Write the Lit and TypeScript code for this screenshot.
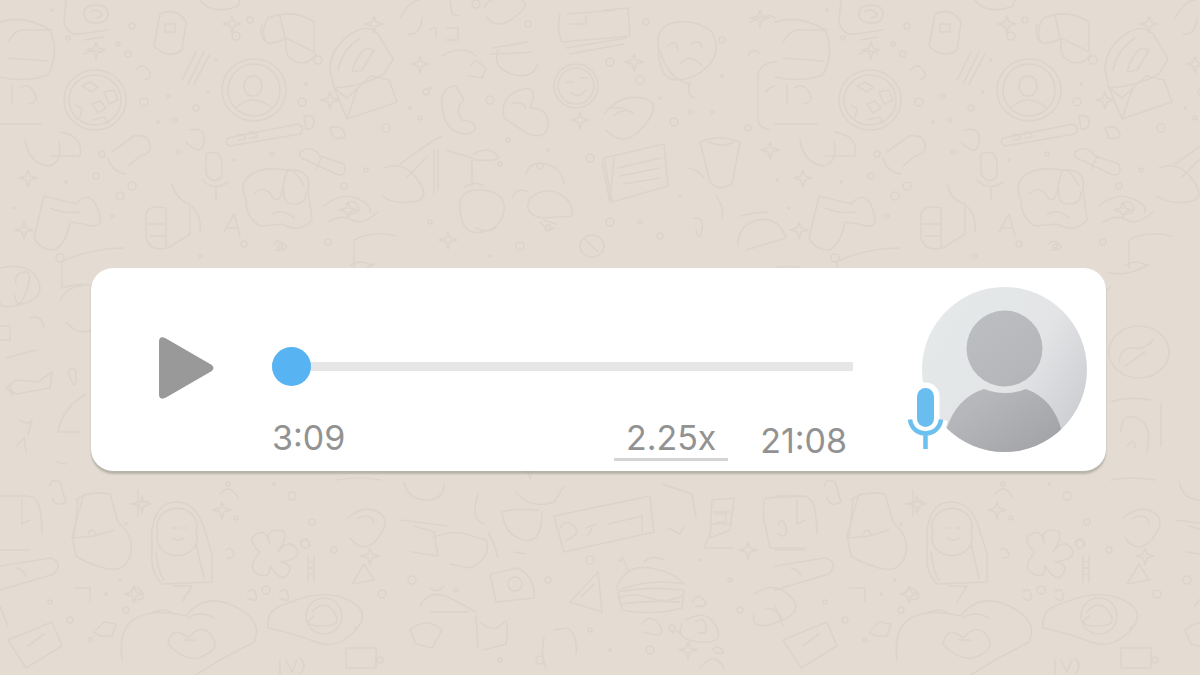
import { LitElement, html, css, svg } from "lit";
import { customElement, property, state } from "lit/decorators.js";

// Width of one repeat of the doodle wallpaper.
const TILE = 775;

const DOODLES = [
  // cake, ball and cup on the left
  "M0 22q25-8 50 8q10 22-2 45q-24 8-48 2M8 58l40 3M8 42q8-14 18-12h26M0 124h42M12 85v18M20 88q8-6 14 4t-6 12M25 140q4 24 24 26q14-4 10-24",
  "M64 100a31 30 0 1 0 62 0a31 30 0 1 0-62 0M69 100a26 25 0 1 0 52 0a26 25 0 1 0-52 0M82 86l8-4l8 5l-6 5zM104 92l10-2l4 10l-9 4zM92 104l8-3l6 7l-8 5zM76 105l6 4l-2 8M92 120l12-3l4 6",
  // ring, chick and stationery along the top
  "M66 0l-2 22q4 14 16 12l28-4M84 13q0-8 12-8t12 9t-12 9t-12-10M90 12q4-4 10 0t-4 6M160 14q16-8 26 8l-4 28q-14 10-28-4zM165 24h10v8h-10zM85 40l18-3M84 54q10-6 18-1",
  "M182 80l14-28M188 84l16-32M194 84l16-30M136 70q6-8 12 0t-4 10M200 0q12 16 38 6l2-6M262 24q-4 18 10 20M268 18q26-10 46 4v30l-28-14q-10 6-14 4M268 18q-8 14-2 24M286 42q-2 16 10 20t20-8M280 16l6 26",
  // medallion
  "M222 90a32 31 0 1 0 64 0a32 31 0 1 0-64 0M228 90a26 26 0 1 0 52 0a26 26 0 1 0-52 0M244 86a8 9 0 1 0 18 0a8 9 0 1 0-18 0M236 108q16-16 36 0",
  // envelope with shell
  "M330 70q0-20 18-34t30-2l15 25-9 15q-20 12-50 14zM338 70q4-20 22-32M352 72q4-16 14-24l8 2-12 20zM334 88l13 31l50-17-8-22-18-4-24 22zM358 87l-11 32",
  // flute and little rings
  "M228 138l70-14q8 4 2 10l-70 12q-6-2-2-8M236 136q4-4 8 0t-6 4M248 134q4-4 8 0t-6 4M304 116q10-2 10 6t-8 7zM330 128q10-4 14 4t-10 6z",
  "M60 132q24 4 20 24h-30M112 152l22-16q14-2 16 8t-10 12l-12 10M108 158q4 14 18 16M190 130q16-4 14 12t-18 0M206 154q14-6 16 8v14q-8 10-16-2zM202 180q12 12 26 2M216 188v12",
  "M300 152q12-8 20 4l24 8q4 14-8 10l-30-14q-8-2-6-8M322 156l-6 14M246 200q-8-18 6-26t34-4q26-2 22 20l4 30q-12 14-30 4l-22 2q-14-8-14-26M254 194q10-10 18 2t12-14 20 4M284 190q-2 14 10 14t12-12M272 214q12-6 22 4",
  "M44 196l32 8q14-16 22 6t-14 14l-14-2q-4 22-16 28-14 0-20-12zM50 208q14 6 30 4M146 216q0-12 20-8v40q-16 4-20-10zM146 224h18M150 236h16M172 184q4 16 18 20v30l-22 14M192 206q10 10 8 26M224 232l10-18l6 22M228 228h10",
  "M324 206q16-14 32-8t14 14M328 222q14-8 24-2t26-8M346 204q8-6 12 2t-10 8M354 240q18-10 42-4M354 240v28M60 262q32-14 64-14M274 244q4-6 10 0t-8 6",
  // top centre: cup, paper and frog
  "M400 18q10-18 20-18M408 34q12 2 14-16M450 0l2 14 8 2M484 8q4-12 28-10t4 18-30 0M430 30q8-8 6 8M446 28h12v12h-12M492 48l36-6M490 54q20 0 42-2M498 50q-6 18 14 24t26-10",
  "M560 14q-4 16 2 28l68-6-2-28-24 2M568 14l48-4M570 24h16v-8M566 48l60-10M570 54l54-10M658 42q0-18 20-20t34 10q10 20-4 34t-32 14-18-38M668 46q8-8 10 4M692 44q8-6 10 4M680 64q10-12 22 2M660 50q8 30 30 34",
  "M554 86a22 22 0 1 0 44 0a22 22 0 1 0-44 0M558 86a18 18 0 1 0 36 0a18 18 0 1 0-36 0M566 82h8M580 78h8M570 92q8 8 16-2M442 96q-2 38 26 38q12-4 4-12l-10-2q-8-12 2-20l-8-14q-10 0-14 10M470 66l6-6 10 8-4 10-14-2M442 56q20-12 34 0M504 118q-4-22 16-28t10 18q18 0 18 16t-20 10l-24-16M512 104q10-4 14 4",
  "M604 114q16-20 38-16t2 28-38 4M608 108h16M614 116q10-10 20-2M690 82q-4 12 4 16M750 22q20-10 25-4M758 74q4-12 18-12M758 74v44q0 10 12 12M766 92q4-6 10-6M748 56q4-10 12-2",
  // middle: pencils, kettle, book, glass
  "M400 164l34-24 8-4M406 178l22-22M434 150v44M438 150v40M384 168q20-8 34 12t-6 22-30-6M446 150l26 8v28M474 154q12-8 22 0t-22 6M460 210q-2-22 22-20t22 20-22 22-22-22M464 188q10-8 20-2M476 228q10 6 20 0M526 174q4-14 20-10t18 20M512 198q6-12 16-6M530 198q16-12 30-4t12 22l-30 2q-20-4-12-20",
  "M604 158l60-14 4 42-56 16zM610 202l-8-40M614 158l-4 42M618 168l42-10M620 176l40-8M624 184l36-6M700 142q18-8 40 0l-8 42q-14 8-22-2zM708 142q16 6 26 0M688 168q8 0 16 10M740 216q14-4 28-4M738 246q0-22 20-26t28 18l-40 12M716 196q8 10 6 22M694 218q10-2 8 12t-6 0M544 220l12 4M540 222q8 10 14 6M580 246a12 11 0 1 0 24 0a12 11 0 1 0-24 0M584 238l14 14",
  // either side of the card
  "M0 268q30-6 38 12t-16 24-22-2M16 284q-2-10 8-12t2 20-12 2M62 262v26q20-6 30-2M60 300q8-14 22-14M66 322q12 14 26 8M0 326h10v14H0M30 318q12-4 14 10M6 358l30-8M6 388l10-8 22 2 14-10-2 16-34 6zM12 396l-2-12M68 372q8-10 8 6t-8-6M58 432q4-24 28-38M58 432h22M20 420q8 6 12 0l-4 14M16 446l8-8 2 14M56 462l10 2",
  "M336 286l-6 6M350 266q10-8 22 0M332 272q20 6 42-8M334 352a30 26 0 1 0 60 0a30 26 0 1 0-60 0M344 362q2-16 14-14t20-8M350 366l20-14M336 402q18-6 40-2M346 432q0-20 16-14t10 34M352 446q8-10 8 2M386 404v42M336 480q22-4 44 0",
  // below the card, left
  "M0 496h26q12 0 14 14t2 24M0 550h30M22 500v24l8-4M50 486q0-8 10-4l6 20q-10 6-14-4M0 566l50-8q14 4 4 16L0 590M16 568q8 2 10 8M76 500q12-10 34-6l8 28q18 16 12 34t-26 12-28-12l-4-20 12-42M74 538l20-2 20-6M88 534q4-8 8 0M78 500l-4 38",
  "M138 490v26M130 504l18-3M152 554v-24q4-28 24-28t28 26l8 26v28l-50 2q-12-12-10-30M158 532a20 18 0 1 0 38 0a20 18 0 1 0-38 0M172 528h4M182 528h4M172 538q8 4 12 0M196 544l8 34M156 552q2 20 8 28M220 494q10-12 18 4M260 552q-14-12-4-18t14 10q-6-14 8-14t0 22q10-14 18-4t-16 14q14 2 8 12t-18-8q0 14-12 8t2-22",
  "M226 550q4-4 7 2t-6 6M308 556v26M314 556v26M308 562h6M308 568h6M308 574h6M352 584l12-20 10 16zM348 518q16-14 30-6t0 26-28 0M358 518q14-6 16 6M300 542q8-8 10 4M248 592q6-6 8 3t-8 3M280 592q6-6 8 3t-8 3",
  "M268 628q-2-16 12-22l22-8q30-8 50 4t2 30-38 10-48-14M306 616a18 18 0 1 0 36 0a18 18 0 1 0-36 0M312 612q12-14 22 0t-12 14-8-10M122 660q-4-32 14-42t50-2q18-24 48-10t20 36l-34 18-26 16M168 644q4-20 20-6 14-16 24-2t-14 22q-16 2-30-14M188 618q12-8 26 0M150 614q14-8 24 0M184 640h12",
  "M130 592q6-8 12 0t-8 8M174 586h18l-10 16M96 630l8-8 12 2-4 12h-12l-6-4M74 588h16v14M8 640l44-18 10 24-36 22zM28 646l16-12M280 660v15M286 660l6 12 5-12M300 658q8 8 0 16M346 648h30v20h-30zM0 606l8 20",
  // below the card, centre
  "M404 482q4 18 22 18t18-16M400 520l48 6M412 552l26 4-4-24-20-6M432 538q24-10 40-2l14 4q6 18-16 28l-20-4M488 532q6 10 10 26M502 512q14-4 36-2M502 514q4 22 22 26t18-28M516 492q14 18 38 10l10-16M478 494q-8 26 6 30M526 554l-12-2",
  "M554 516l96-20 4 36-90 20zM560 528q6-10 14-2t-8 14M586 528l10-4M608 524l34-8v16M592 528l-4 8M662 484l30 10 4 24M712 500l22-2-4 32-20 8zM714 512h16M712 524h18M716 514h10v8h-10M710 534l-6 14h30",
  "M616 588q10-24 34-20t34 16q-32-6-66 6M618 592q30-6 66-2l-2 18q-28 8-60 2zM618 598q16-6 32 0t32-2M622 604q24-4 58-2M628 570l-6-14M644 562q8-8 20-2M668 528l12 6 4-8M764 520q-2-20 2-22l40-2M764 520l6 28h36M778 524q6-8 8 4t-8 6",
  "M490 574l28-6q18 10 16 30l-38 4zM508 584a7 7 0 1 0 14 0a7 7 0 1 0-14 0M570 602l28-30 4 40zM582 596l12-12M420 606q10-18 30-8l26 14M430 612h38M430 588q8 6 14-2M476 616l2 32M480 622q14 12 22 2t4 20l-22 6M554 630l14-2q10 8 8 26M544 638q-4 16 2 30M692 602q6-10 12-2t-8 6M686 620q20-12 30 6t-16 16-18-18M696 622q8-6 10 4t-8 6",
  "M754 594q20-14 36 2t-12 26-24-8M766 608q14 2 16 12M642 624q10-12 18 2t-16 6M672 634q4-8 10 2M410 630q16-14 32 0l-10 18-16-4zM700 668q14-18 24 0M712 650q6-6 10 0t-8 2",
];

// Stars, rings and dots scattered between the larger drawings.
const RINGS = [
  [52, 10], [68, 38], [128, 54], [144, 102], [158, 122], [175, 120], [250, 20], [302, 102], [306, 84],
  [366, 170], [102, 154], [132, 186], [66, 182], [112, 216], [528, 24], [476, 4], [430, 88], [508, 140],
  [540, 166], [610, 62], [722, 76], [712, 112], [748, 128], [674, 122], [777, 180], [430, 222], [548, 228],
  [610, 222], [586, 470], [228, 484], [312, 522], [305, 544], [106, 594], [50, 602], [126, 610], [412, 580],
  [620, 560], [590, 630], [672, 628], [540, 660], [14, 208], [280, 246], [328, 242], [60, 258], [126, 524],
  [118, 44], [132, 26], [236, 36], [216, 60], [168, 96], [196, 108], [318, 60], [208, 92], [178, 152],
  [96, 176], [120, 196], [234, 160], [272, 154], [344, 186], [386, 128], [410, 108], [420, 118], [426, 92],
  [490, 100], [548, 150], [500, 164], [646, 22], [640, 80], [660, 98], [690, 112], [722, 40], [590, 158],
  [680, 196], [640, 222], [660, 236], [520, 246], [490, 256], [200, 256], [244, 244], [292, 496], [274, 484],
  [236, 518], [334, 550], [382, 594], [356, 628], [90, 640], [70, 620], [266, 590], [120, 580], [456, 590],
  [548, 580], [590, 560], [700, 560], [730, 580], [740, 610], [650, 650], [610, 650], [500, 660], [380, 660],
];
const STARS = [
  [420, 64], [634, 62], [770, 150], [448, 240], [330, 100], [232, 24], [28, 178], [374, 24], [580, 120],
  [348, 210], [760, 18], [134, 594], [748, 550], [24, 230], [370, 556], [530, 470], [222, 510], [688, 650],
  [96, 50], [142, 504],
];

const backdrop = svg`
  <defs>
    <g id="tile">
      ${DOODLES.map((d) => svg`<path d=${d} />`)}
      ${RINGS.map(([x, y], i) => svg`<circle cx=${x} cy=${y} r=${1 + (i % 4)} />`)}
      ${STARS.map(
        ([x, y]) => svg`<path d=${`M${x} ${y - 8}l2 6 7 2-7 2-2 7-2-7-7-2 7-2z`} />`
      )}
    </g>
  </defs>
  <use href="#tile" />
  <use href="#tile" x=${TILE} />
  <use href="#tile" x=${TILE * 2} />
`;

@customElement("voice-avatar")
class VoiceAvatar extends LitElement {
  static styles = css`
    :host {
      display: block;
      position: relative;
      width: 165px;
      height: 165px;
    }
    .photo {
      display: block;
      width: 100%;
      height: 100%;
    }
    .mic {
      position: absolute;
      left: -19px;
      top: 92px;
    }
  `;

  render() {
    return html`
      <svg class="photo" viewBox="0 0 165 165" role="img" aria-label="Contact photo">
        <defs>
          <linearGradient id="disc" x1="0" y1="0.15" x2="1" y2="0.75">
            <stop offset="0" stop-color="#e6e9ea" />
            <stop offset="0.6" stop-color="#e2e4e6" />
            <stop offset="1" stop-color="#cbcdd0" />
          </linearGradient>
          <linearGradient id="person" gradientUnits="userSpaceOnUse" x1="35" y1="30" x2="130" y2="160">
            <stop offset="0" stop-color="#bcbec1" />
            <stop offset="0.5" stop-color="#b6b7ba" />
            <stop offset="1" stop-color="#a2a3a7" />
          </linearGradient>
          <clipPath id="round"><circle cx="82.5" cy="82.5" r="82.5" /></clipPath>
        </defs>
        <g clip-path="url(#round)">
          <rect width="165" height="165" fill="url(#disc)" />
          <circle cx="82.5" cy="61.5" r="38" fill="url(#person)" />
          <path
            d="M62 102Q83 110 104 102Q132 112 140 145V165H24V143Q34 111 62 102Z"
            fill="url(#person)"
          />
        </g>
      </svg>
      <svg class="mic" width="45" height="76" viewBox="0 0 45 76" aria-hidden="true">
        <g fill="none" stroke="#fff">
          <path d="M22.500 17.500V39.500" stroke-width="28" stroke-linecap="round" />
          <path d="M7 41C9 58 36 58 38 41M22.500 54V70" stroke-width="13" />
        </g>
        <path d="M22.500 17.500V39.500" stroke="#69bdef" stroke-width="17" stroke-linecap="round" />
        <path
          d="M7 40.500C9 59 36 59 38 40.500M22.500 54V70"
          fill="none"
          stroke="#6cc0ef"
          stroke-width="4.500"
        />
      </svg>
    `;
  }
}

@customElement("voice-message")
class VoiceMessage extends LitElement {
  @property() elapsed = "3:09";
  @property() total = "21:08";
  @property() speed = "2.25x";
  @state() private position = 0;

  static styles = css`
    :host {
      display: block;
      flex: 1;
      min-width: 0;
    }
    .card {
      display: flex;
      align-items: flex-start;
      box-sizing: border-box;
      padding: 19px 19px 10px 68px;
      border-radius: 22px;
      background: #fff;
      box-shadow: 0 3px 2px rgba(105, 108, 98, 0.36);
    }
    .play {
      flex: none;
      margin: 50px 58px 0 0;
      padding: 0;
      border: 0;
      background: none;
      cursor: pointer;
    }
    .play svg {
      display: block;
    }
    .main {
      flex: 1;
      min-width: 0;
      padding-top: 60px;
    }
    .seek {
      display: block;
      appearance: none;
      width: 100%;
      height: 39px;
      margin: 0;
      background: transparent;
      cursor: pointer;
    }
    .seek::-webkit-slider-runnable-track {
      height: 9px;
      background: #e6e6e6;
    }
    .seek::-webkit-slider-thumb {
      appearance: none;
      width: 39px;
      height: 39px;
      margin-top: -15px;
      border-radius: 50%;
      background: #58b3f3;
    }
    .meta {
      display: flex;
      align-items: flex-start;
      margin-top: 32px;
      padding-right: 6px;
      font: 400 34px/40px Inter, "Liberation Sans", sans-serif;
      color: #929292;
    }
    .elapsed {
      margin-right: auto;
    }
    .speed {
      min-width: 114px;
      padding: 0;
      border: 0;
      border-bottom: 3px solid #d4d4d4;
      background: none;
      font: inherit;
      color: inherit;
      cursor: pointer;
    }
    .total {
      align-self: flex-end;
      margin-left: 32px;
    }
    voice-avatar {
      flex: none;
      margin-left: 69px;
    }
  `;

  private seek(event: Event) {
    this.position = Number((event.target as HTMLInputElement).value);
  }

  render() {
    return html`
      <div class="card">
        <button class="play" type="button" aria-label="Play">
          <svg width="55" height="62" viewBox="0 0 55 62">
            <path
              d="M0 5Q0-2 7 1.500L52 27.500Q57 31 52 34.500L7 60.500Q0 64 0 57Z"
              fill="#999"
            />
          </svg>
        </button>
        <div class="main">
          <input
            class="seek"
            type="range"
            min="0"
            max="1268"
            aria-label="Seek"
            .value=${String(this.position)}
            @input=${this.seek}
          />
          <div class="meta">
            <span class="elapsed">${this.elapsed}</span>
            <button class="speed" type="button" aria-label="Playback speed ${this.speed}">${this.speed}</button>
            <span class="total">${this.total}</span>
          </div>
        </div>
        <voice-avatar></voice-avatar>
      </div>
    `;
  }
}

@customElement("app-root")
class AppRoot extends LitElement {
  static styles = css`
    :host {
      display: block;
    }
    .chat {
      position: relative;
      display: flex;
      align-items: center;
      box-sizing: border-box;
      min-height: 100vh;
      padding: 64px 94px 0 91px;
      overflow: hidden;
      background: #e4dcd3;
    }
    .wallpaper {
      position: absolute;
      inset: 0;
      width: 100%;
      height: 100%;
      fill: none;
      stroke: #dcd4cb;
      stroke-width: 1.6;
      stroke-linecap: round;
      stroke-linejoin: round;
    }
    voice-message {
      position: relative;
    }
  `;

  render() {
    return html`
      <main class="chat">
        <svg class="wallpaper" aria-hidden="true">${backdrop}</svg>
        <voice-message></voice-message>
      </main>
    `;
  }
}
